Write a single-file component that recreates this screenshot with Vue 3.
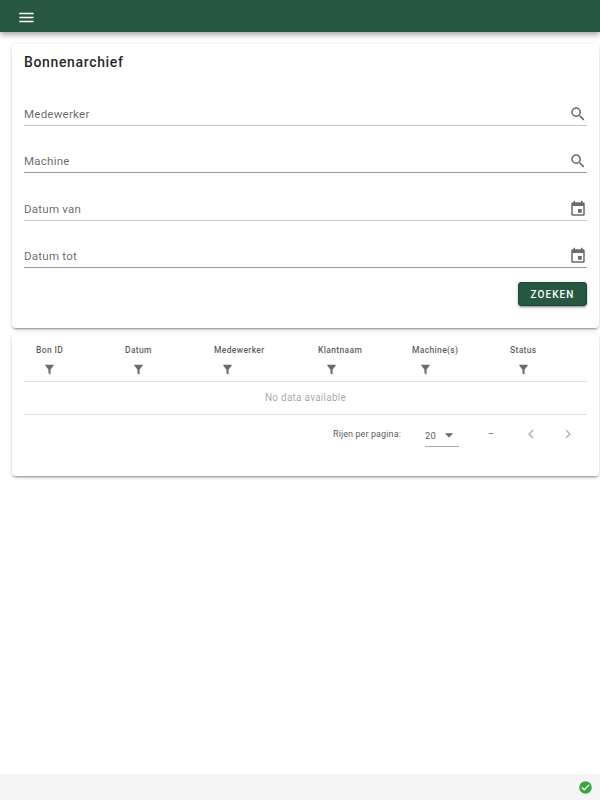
<script setup>
const fields = [
  { label: 'Medewerker', icon: 'search', dim: true },
  { label: 'Machine', icon: 'search', dim: false },
  { label: 'Datum van', icon: 'cal', dim: true },
  { label: 'Datum tot', icon: 'cal', dim: false }
]
const columns = [
  { label: 'Bon ID', width: 89 },
  { label: 'Datum', width: 89 },
  { label: 'Medewerker', width: 104 },
  { label: 'Klantnaam', width: 94 },
  { label: 'Machine(s)', width: 98 },
  { label: 'Status', width: 77 }
]
</script>

<template>
  <div class="app">
    <header class="bar">
      <svg class="menu" viewBox="0 0 24 24" width="19" height="19"><path fill="#fff" d="M3 6h18v2H3V6m0 5h18v2H3v-2m0 5h18v2H3v-2Z"/></svg>
    </header>
    <main class="main">
      <section class="card search">
        <h1 class="title">Bonnenarchief</h1>
        <div class="fields">
          <div v-for="f in fields" :key="f.label" class="field" :class="{ dim: f.dim }">
            <span class="label">{{ f.label }}</span>
            <svg v-if="f.icon === 'search'" viewBox="0 0 24 24" width="18" height="18"><path fill="#6b6b6b" d="M9.5 3A6.5 6.5 0 0 1 16 9.5c0 1.61-.59 3.09-1.56 4.23l.27.27h.79l5 5-1.5 1.5-5-5v-.79l-.27-.27A6.52 6.52 0 0 1 9.5 16 6.5 6.5 0 0 1 3 9.5 6.5 6.5 0 0 1 9.5 3m0 2C7 5 5 7 5 9.5S7 14 9.5 14 14 12 14 9.5 12 5 9.5 5Z"/></svg>
            <svg v-else viewBox="0 0 24 24" width="18" height="18"><path fill="#6b6b6b" d="M19 19H5V8h14m-3-7v2H8V1H6v2H5c-1.11 0-2 .89-2 2v14a2 2 0 0 0 2 2h14a2 2 0 0 0 2-2V5a2 2 0 0 0-2-2h-1V1m-1 11h-5v5h5v-5Z"/></svg>
          </div>
        </div>
        <div class="actions"><button class="btn">ZOEKEN</button></div>
      </section>

      <section class="card results">
        <div class="thead">
          <div v-for="c in columns" :key="c.label" class="th" :style="{ width: c.width + 'px' }">
            <span class="th-label">{{ c.label }}</span>
            <svg class="funnel" viewBox="0 0 24 24" width="13" height="13"><path fill="#6b6b6b" d="M14 12v7.88c.04.3-.06.62-.29.83a1 1 0 0 1-1.41 0l-2.01-2.01a.99.99 0 0 1-.29-.83V12h-.03L4.21 4.62a1 1 0 0 1 .17-1.4c.19-.14.4-.22.62-.22h14c.22 0 .43.08.62.22a1 1 0 0 1 .17 1.4L14.03 12H14Z"/></svg>
          </div>
        </div>
        <div class="empty">No data available</div>
        <div class="pager">
          <span class="per">Rijen per pagina:</span>
          <div class="select">
            <span>20</span>
            <svg viewBox="0 0 24 24" width="20" height="20"><path fill="#6b6b6b" d="M7 10l5 5 5-5H7Z"/></svg>
          </div>
          <span class="range">–</span>
          <div class="nav">
            <svg viewBox="0 0 24 24" width="18" height="18"><path fill="#b5b5b5" d="M15.41 16.58 10.83 12l4.58-4.59L14 6l-6 6 6 6 1.41-1.42Z"/></svg>
            <svg viewBox="0 0 24 24" width="18" height="18"><path fill="#b5b5b5" d="M8.59 16.58 13.17 12 8.59 7.41 10 6l6 6-6 6-1.41-1.42Z"/></svg>
          </div>
        </div>
      </section>
    </main>
    <footer class="foot">
      <svg viewBox="0 0 24 24" width="15" height="15"><path fill="#3aa53f" d="M12 2a10 10 0 1 0 0 20 10 10 0 0 0 0-20Z"/><path fill="#fff" d="m10 17-4.5-4.5 1.41-1.41L10 14.17l7.09-7.09 1.41 1.42L10 17Z"/></svg>
    </footer>
  </div>
</template>

<style>
html, body { margin: 0; background: #fff; }
</style>

<style scoped>
.app {
  height: 800px;
  display: flex;
  flex-direction: column;
  font-family: Roboto, "Liberation Sans", sans-serif;
  color: rgba(0, 0, 0, .87);
  overflow: hidden;
}
.bar {
  height: 32px;
  flex: none;
  box-sizing: border-box;
  background: #275741;
  display: flex;
  align-items: center;
  padding: 2px 0 0 17px;
  box-shadow: 0 2px 4px -1px rgba(0,0,0,.2), 0 4px 5px 0 rgba(0,0,0,.14), 0 1px 10px 0 rgba(0,0,0,.12);
  position: relative;
}
.main {
  flex: 1;
  padding: 12px 1px 0 12px;
  display: flex;
  flex-direction: column;
  gap: 6px;
}
.card {
  background: #fff;
  border-radius: 4px;
  box-shadow: 0 3px 1px -2px rgba(0,0,0,.2), 0 2px 2px 0 rgba(0,0,0,.14), 0 1px 5px 0 rgba(0,0,0,.12);
}
.search {
  height: 284px;
  box-sizing: border-box;
  padding: 0 12px;
}
.title {
  margin: 0;
  padding-top: 9px;
  font-size: 14px;
  line-height: 18px;
  font-weight: 500;
  letter-spacing: .65px;
  color: rgba(0,0,0,.87);
}
.fields {
  margin-top: 7px;
  display: flex;
  flex-direction: column;
}
.field {
  height: 47.5px;
  box-sizing: border-box;
  display: flex;
  align-items: flex-end;
  justify-content: space-between;
  padding: 0 0 2px;
  border-bottom: 1px solid #9a9a9a;
}
.field.dim { border-bottom: 1.5px solid #c4c4c4; }
.label {
  font-size: 11.5px;
  line-height: 18px;
  letter-spacing: .25px;
  color: rgba(0,0,0,.62);
}
.actions {
  display: flex;
  justify-content: flex-end;
  margin-top: 14px;
}
.btn {
  width: 69px;
  height: 24px;
  padding: 0;
  border: 1px solid #1c4430;
  border-radius: 3px;
  background: #275741;
  color: #fff;
  font: 500 10px Roboto, "Liberation Sans", sans-serif;
  letter-spacing: 1.1px;
  box-shadow: 0 3px 1px -2px rgba(0,0,0,.2), 0 2px 2px 0 rgba(0,0,0,.14), 0 1px 5px 0 rgba(0,0,0,.12);
}
.results {
  height: 142px;
  box-sizing: border-box;
  padding: 0 12px;
}
.thead {
  display: flex;
  height: 48px;
  box-sizing: border-box;
  padding-left: 12px;
  border-bottom: 1px solid #e0e0e0;
}
.th {
  flex: none;
  display: flex;
  flex-direction: column;
  align-items: flex-start;
}
.th-label {
  margin-top: 11px;
  font-size: 8.5px;
  line-height: 10px;
  font-weight: 500;
  letter-spacing: .35px;
  color: rgba(0,0,0,.68);
}
.funnel { margin: 8px 0 0 7px; }
.empty {
  height: 33px;
  box-sizing: border-box;
  padding-bottom: 2px;
  border-bottom: 1px solid #e0e0e0;
  display: flex;
  align-items: center;
  justify-content: center;
  font-size: 10px;
  letter-spacing: .25px;
  color: rgba(0,0,0,.38);
}
.pager {
  display: flex;
  align-items: center;
  height: 40px;
  box-sizing: border-box;
  padding: 0 0 3px 309px;
  font-size: 9px;
  letter-spacing: .1px;
  color: rgba(0,0,0,.7);
}
.per { width: 92px; flex: none; }
.select {
  width: 34px;
  height: 22px;
  flex: none;
  box-sizing: border-box;
  border-bottom: 1px solid #aaa;
  display: flex;
  align-items: center;
  justify-content: space-between;
  font-size: 9.5px;
  margin-top: 4px;
}
.range { margin-left: 29px; width: 34px; flex: none; }
.nav { display: flex; gap: 19px; }
.foot {
  height: 26px;
  flex: none;
  background: #f5f5f5;
  display: flex;
  align-items: center;
  justify-content: flex-end;
  padding-right: 7px;
}
</style>
